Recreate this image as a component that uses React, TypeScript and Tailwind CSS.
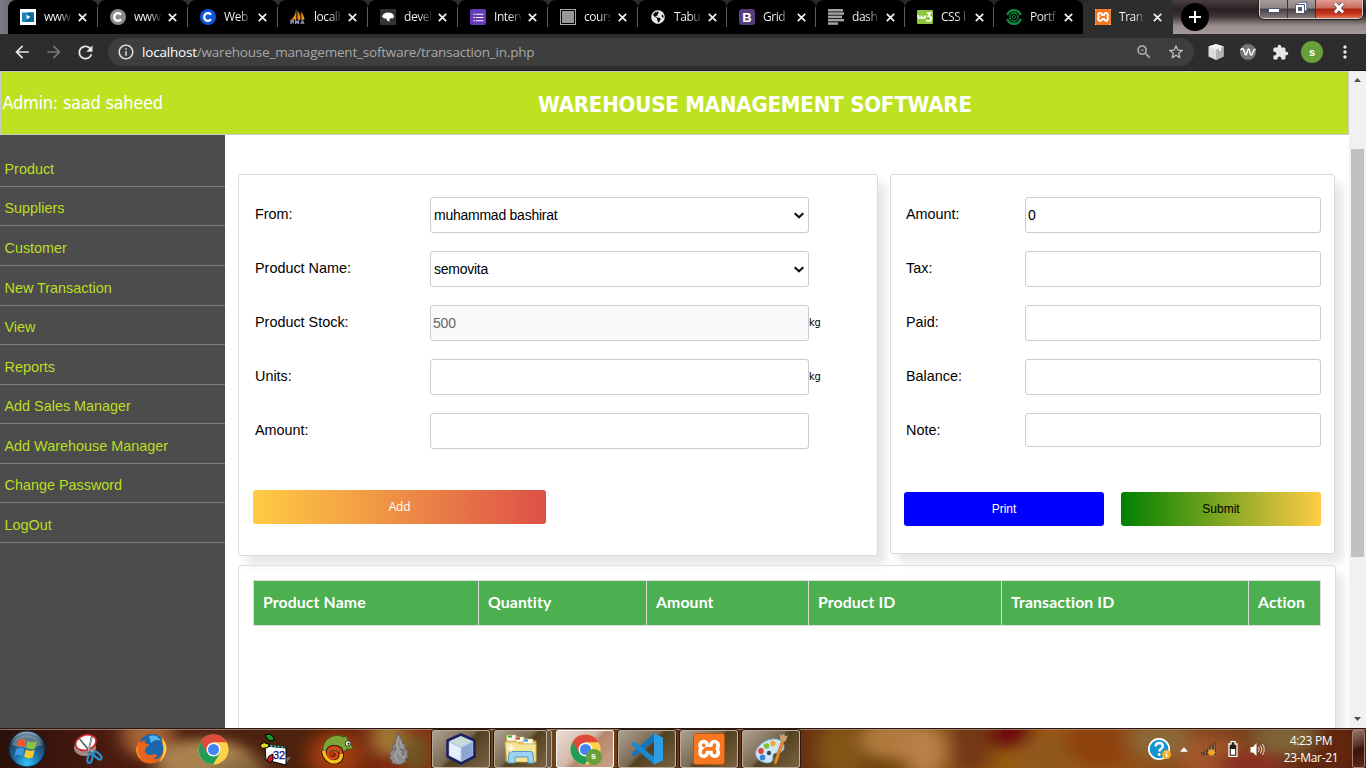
import React from "react";
import {
  MdArrowBack,
  MdArrowForward,
  MdRefresh,
  MdInfoOutline,
  MdZoomOut,
  MdStarBorder,
  MdExtension,
  MdMoreVert,
  MdFormatListBulleted,
} from "react-icons/md";
import { FaGlobeAmericas } from "react-icons/fa";
import { SiXampp } from "react-icons/si";

/* ---------- favicons ---------- */

const VideoFav = () => (
  <svg width="16" height="16" viewBox="0 0 16 16">
    <rect width="16" height="16" fill="#fff" />
    <rect x="2" y="3.500" width="12" height="9.500" fill="#1b86b8" />
    <path d="M8 3.500h6v9.500H5z" fill="#0f6a9c" />
    <path d="M6.500 5.800v4.600l4-2.300z" fill="#fff" />
  </svg>
);

const RoundC = ({ fill }: { fill: string }) => (
  <svg width="16" height="16" viewBox="0 0 16 16">
    <circle cx="8" cy="8" r="8" fill={fill} />
    <path d="M11 5.700A3.800 3.800 0 1 0 11 10.300" fill="none" stroke="#fff" strokeWidth="2.300" />
  </svg>
);

const PmaFav = () => (
  <svg width="17" height="16" viewBox="0 0 17 16">
    <path d="M6 0C6 5 4 9 1 11h5.500zM8 1v10h3C11 7 10 4 8 1zM12 3v8h3.500C15 8 14 5 12 3z" fill="#f29111" />
    <path d="M7 0v11M11.500 2v9" stroke="#6a5030" strokeWidth="0.800" />
    <path d="M1 15.500v-3.500h2.500v2H1M6 15.500v-3.500l1.500 2L9 12v3.500M11.500 15.500l1.700-3.500 1.700 3.500M12.500 14.300h2" fill="none" stroke="#8e90b5" strokeWidth="1.400" />
  </svg>
);

const MdnFav = () => (
  <svg width="16" height="16" viewBox="0 0 16 16">
    <rect width="16" height="16" fill="#333" />
    <path d="M2 7.500L3.500 5l3-1.500 4 .2L13 5l1 2.500-1 1.700h-2.500l-1 1v2.500L7 11.500 6 9.300l-2 .2z" fill="#fff" />
  </svg>
);

const FormsFav = () => (
  <span className="flex size-4 items-center justify-center rounded-[2px] bg-[#673ab7] text-white">
    <MdFormatListBulleted size={13} />
  </span>
);

const SquareFav = () => (
  <svg width="16" height="16" viewBox="0 0 16 16">
    <rect x="0.500" y="0.500" width="15" height="15" fill="#000" stroke="#aaa" />
    <rect x="2" y="2" width="12" height="12" fill="#999" />
  </svg>
);

const GlobeFav = () => <FaGlobeAmericas size={14} color="#e8e8e8" />;

const BootFav = () => (
  <span className="flex size-4 items-center justify-center rounded-[3px] bg-[#563d7c] font-['Liberation_Sans',sans-serif] text-[13px] leading-none font-bold text-white">
    B
  </span>
);

const LinesFav = () => (
  <svg width="16" height="16" viewBox="0 0 16 16" fill="#a3a3a3">
    <rect width="15" height="2.500" />
    <rect y="3.300" width="16" height="2.500" />
    <rect y="6.600" width="14" height="2.500" />
    <rect y="9.900" width="16" height="2.500" />
    <rect y="13.300" width="10" height="2.500" />
  </svg>
);

const W3Fav = () => (
  <svg width="16" height="14" viewBox="0 0 16 14">
    <rect width="16" height="14" rx="1" fill="#8bc63e" />
    <path d="M1.200 5v1.200q0 1.800 1.700 1.800T4.600 6.200V5.500q0 2.500 1.900 2.500t1.900-2.500M9.800 3h3.500L11.300 6q2.800 0 2.800 2.400T11.500 11q-1.500 0-2.300-.8" fill="none" stroke="#fff" strokeWidth="1.700" />
  </svg>
);

const RingFav = () => (
  <svg width="16" height="16" viewBox="0 0 16 16" fill="none" stroke="#0b8a3c">
    <path d="M1.300 6.200A7 7 0 0 1 14.700 6.200M1.300 9.800A7 7 0 0 0 14.700 9.800" strokeWidth="2.400" />
    <circle cx="8" cy="8" r="4" strokeWidth="1.300" />
    <circle cx="8" cy="8" r="1.600" strokeWidth="1" />
  </svg>
);

const XamppFav = () => (
  <span className="flex size-4 items-center justify-center bg-white">
    <SiXampp size={16} color="#f37623" />
  </span>
);

const tabs = [
  { title: "www.", icon: <VideoFav /> },
  { title: "www.", icon: <RoundC fill="#8a8a8a" /> },
  { title: "Web", icon: <RoundC fill="#0b57d8" /> },
  { title: "localh", icon: <PmaFav /> },
  { title: "devel", icon: <MdnFav /> },
  { title: "Interv", icon: <FormsFav /> },
  { title: "cours", icon: <SquareFav /> },
  { title: "Tabul", icon: <GlobeFav />, narrow: true },
  { title: "Grid", icon: <BootFav />, narrow: true },
  { title: "dash", icon: <LinesFav />, narrow: true },
  { title: "CSS l", icon: <W3Fav />, narrow: true },
  { title: "Portf", icon: <RingFav />, narrow: true },
  { title: "Trans", icon: <XamppFav />, active: true },
];

function TabStrip() {
  return (
    <div className="flex h-[34px] overflow-hidden bg-[linear-gradient(90deg,#7a7c88_0%,#3a3234_4%,#2b2526_80%,#3a3132_87%,#4a4244_93%,#7b7374_100%)] pl-2">
      {tabs.map((t, i) => (
        <div
          key={i}
          className={
            t.active
              ? "flex h-full w-[90px] shrink-0 items-center rounded-t-[8px] bg-[#2d2d2d] pl-3"
              : t.narrow
                ? "flex h-full w-[89px] shrink-0 items-center rounded-t-[8px] bg-black pl-3"
                : "flex h-full w-[90px] shrink-0 items-center rounded-t-[8px] bg-black pl-3"
          }
        >
          <span className="flex w-4 shrink-0 justify-center">{t.icon}</span>
          <span className="ml-2 w-[27px] overflow-hidden bg-[linear-gradient(90deg,#fff_55%,#222_100%)] bg-clip-text font-['Open_Sans',sans-serif] text-[12px] leading-4 tracking-[-0.450px] whitespace-nowrap text-transparent">
            {t.title}
          </span>
          <svg className="ml-[7px] shrink-0" width="9" height="9" viewBox="0 0 9 9">
            <path d="M0.800 0.800l7.400 7.400M8.200 0.800l-7.400 7.400" stroke="#f2f2f2" strokeWidth="1.700" />
          </svg>
          {!t.active && i !== 11 && <span className="ml-auto h-5 w-px bg-[#5a5a5a]" />}
        </div>
      ))}
      <div className="flex flex-1 bg-[linear-gradient(180deg,#4a4041_0%,#2a2122_28%,#3c3334_48%,#988b8b_75%,#a59a9c_100%)]">
        <div className="mt-[3px] ml-[8px] flex size-7 items-center justify-center rounded-full bg-black">
          <svg width="12" height="12" viewBox="0 0 12 12">
            <path d="M6 0v12M0 6h12" stroke="#fff" strokeWidth="2" />
          </svg>
        </div>
        <div className="mr-[3px] ml-auto flex h-[19px] overflow-hidden rounded-b-[5px] border border-t-0 border-[#d5cfcf] shadow-[0_0_1px_1px_#221c1c]">
          <div className="flex w-7 justify-center border-r border-[#393233] bg-[linear-gradient(180deg,#a59c9c_0%,#8d8484_45%,#453d3e_50%,#847b7c_100%)]">
            <svg width="12" height="18" viewBox="0 0 12 18">
              <rect x="0.500" y="8.500" width="11" height="4" fill="#fff" stroke="#50557a" />
            </svg>
          </div>
          <div className="flex w-7 justify-center border-r border-[#393233] bg-[linear-gradient(180deg,#a59c9c_0%,#8d8484_45%,#453d3e_50%,#847b7c_100%)]">
            <svg width="13" height="18" viewBox="0 0 13 18">
              <path d="M4.500 3.500h6v7" fill="none" stroke="#50557a" strokeWidth="3.400" />
              <path d="M4 3.500h6.500v7" fill="none" stroke="#fff" strokeWidth="1.600" />
              <rect x="2" y="6" width="6" height="6" fill="#555" stroke="#50557a" strokeWidth="3.600" />
              <rect x="2" y="6" width="6" height="6" fill="#5a5a6a" stroke="#fff" strokeWidth="2" />
            </svg>
          </div>
          <div className="flex w-[46px] justify-center bg-[linear-gradient(180deg,#dd9d93_0%,#cb6a5c_45%,#a8200c_50%,#cb3c22_80%,#e0765e_100%)]">
            <svg width="14" height="17" viewBox="0 0 14 17">
              <path d="M3 3.500l8 9M11 3.500l-8 9" stroke="#5a4458" strokeWidth="4.600" />
              <path d="M3 3.500l8 9M11 3.500l-8 9" stroke="#fff" strokeWidth="2.800" />
            </svg>
          </div>
        </div>
      </div>
    </div>
  );
}

function Toolbar() {
  return (
    <div className="flex h-[37px] items-center border-b border-[#1b1b1b] bg-[#2d2d2d] pl-3 text-[#e8e8e8]">
      <MdArrowBack size={20} />
      <MdArrowForward size={20} className="ml-3 text-[#777]" />
      <MdRefresh size={21} className="ml-[11px]" />
      <div className="ml-3 flex h-7 w-[1086px] items-center rounded-full bg-[#3e3e3e] pl-[9px]">
        <MdInfoOutline size={18} className="text-[#e0e0e0]" />
        <span className="ml-[7px] font-['Open_Sans',sans-serif] text-[13.500px] tracking-[-0.200px] whitespace-nowrap text-[#a8a8a8]">
          <span className="text-white">localhost</span>/warehouse_management_software/transaction_in.php
        </span>
        <MdZoomOut size={18} className="ml-auto text-[#b5b5b5]" />
        <MdStarBorder size={18} className="mr-[9px] ml-[14px] text-[#c8c8c8]" />
      </div>
      <svg className="ml-3.5" width="16" height="16" viewBox="0 0 16 16">
        <path d="M8 0l7.500 2.500v10L8 16 .5 12.500v-10z" fill="#dcdcdc" />
        <path d="M8 5.500l7.500-3v10L8 16z" fill="#b4b4b4" />
        <path d="M.5 2.500L8 0l7.500 2.500L8 5.500z" fill="#f2f2f2" />
        <path d="M11 4.200l2-.8v3l-2 .8z" fill="#f6f6f6" />
      </svg>
      <svg className="ml-4" width="16" height="16" viewBox="0 0 16 16">
        <circle cx="8" cy="8" r="8" fill="#777" />
        <path d="M.5 6C2 4.500 3.300 4.300 4 6.500s1 4.500 2 4.500S7.200 5 8.600 5s1 6 2.600 6S12.500 6 15.500 5" fill="none" stroke="#fff" strokeWidth="1.500" />
      </svg>
      <MdExtension size={17} className="ml-4" />
      <div className="ml-3 flex size-[22px] items-center justify-center rounded-full bg-[#689f38] font-['Liberation_Sans',sans-serif] text-[11px] leading-none font-bold text-white">
        s
      </div>
      <MdMoreVert size={20} className="ml-3" />
    </div>
  );
}

/* ---------- page ---------- */

const menu = [
  "Product",
  "Suppliers",
  "Customer",
  "New Transaction",
  "View",
  "Reports",
  "Add Sales Manager",
  "Add Warehouse Manager",
  "Change Password",
  "LogOut",
];

function Sidebar() {
  return (
    <nav className="w-[225px] shrink-0 bg-[#4c4c4c] pt-[12.400px]">
      {menu.map((m) => (
        <div
          key={m}
          className="flex h-[39.560px] items-end border-b border-[#808080] pb-[8px] pl-[4.500px] text-[14.400px] leading-[18px] text-[#bbdf22]"
        >
          {m}
        </div>
      ))}
    </nav>
  );
}

const Chevron = () => (
  <svg className="mr-[3px] ml-auto" width="12" height="7" viewBox="0 0 12 7">
    <path d="M1.700 1.200l4.300 4 4.300-4" fill="none" stroke="#111" strokeWidth="2.100" />
  </svg>
);

function Field({
  label,
  value,
  select,
  disabled,
  unit,
}: {
  label: string;
  value?: string;
  select?: boolean;
  disabled?: boolean;
  unit?: string;
}) {
  return (
    <div className="flex h-9">
      <span className="w-[175px] pt-[8px] text-[14.400px] leading-[18px]">{label}</span>
      <div
        className={
          disabled
            ? "flex w-[379px] items-center rounded-[3px] border border-[#ccc] bg-[#fafafa] pl-0.5 text-[14px] tracking-[-0.200px] text-[#666]"
            : "flex w-[379px] items-center rounded-[3px] border border-[#ccc] bg-white pt-px pl-[3px] text-[14px] tracking-[-0.250px]"
        }
      >
        {value}
        {select && <Chevron />}
      </div>
      {unit && (
        <span className="self-center pt-px font-['DejaVu_Sans_Condensed','DejaVu_Sans',sans-serif] text-[11px] tracking-[-0.300px]">
          {unit}
        </span>
      )}
    </div>
  );
}

function PayField({ label, value, short }: { label: string; value?: string; short?: boolean }) {
  return (
    <div className="flex h-9 items-start">
      <span className="w-[119px] pt-[8px] text-[14.400px] leading-[18px]">{label}</span>
      <div
        className={
          short
            ? "flex h-[34px] w-[296px] items-center rounded-[3px] border border-[#ccc] bg-white pl-0.5 text-[14px]"
            : "flex h-9 w-[296px] items-center rounded-[3px] border border-[#ccc] bg-white pl-0.5 text-[14px]"
        }
      >
        {value}
      </div>
    </div>
  );
}

function Content() {
  return (
    <main className="flex-1 overflow-hidden bg-white pt-[39px] pl-[13px]">
      <div className="flex items-start gap-3">
        <section className="h-[382px] w-[640px] rounded-[3px] border border-[#dadcdc] bg-white pt-[22px] pl-4 shadow-[8px_9px_8px_#e6e8ea]">
          <div className="flex flex-col gap-[18px]">
            <Field label="From:" value="muhammad bashirat" select />
            <Field label="Product Name:" value="semovita" select />
            <Field label="Product Stock:" value="500" disabled unit="kg" />
            <Field label="Units:" unit="kg" />
            <Field label="Amount:" />
          </div>
          <div className="mt-[41px] -ml-0.5 flex h-[34px] w-[293px] items-center justify-center rounded-[3px] bg-[linear-gradient(90deg,#ffcc44,#dd5047)] font-['Open_Sans',sans-serif] text-[12px] tracking-[-0.200px] text-white">
            Add
          </div>
        </section>
        <section className="h-[380px] w-[445px] rounded-[3px] border border-[#dadcdc] bg-white pt-[22px] pl-[15px] shadow-[8px_9px_8px_#e6e8ea]">
          <div className="flex flex-col gap-[18px]">
            <PayField label="Amount:" value="0" />
            <PayField label="Tax:" />
            <PayField label="Paid:" />
            <PayField label="Balance:" />
            <PayField label="Note:" short />
          </div>
          <div className="mt-[43px] -ml-0.5 flex gap-[17px] text-[12px]">
            <div className="flex h-[34px] w-[200px] items-center justify-center rounded-[3px] bg-[#0000ff] text-white">
              Print
            </div>
            <div className="flex h-[34px] w-[200px] items-center justify-center rounded-[3px] bg-[linear-gradient(90deg,#008000,#ffcc44)]">
              Submit
            </div>
          </div>
        </section>
      </div>
      <section className="mt-[9px] h-[200px] w-[1098px] rounded-[3px] border border-[#dadcdc] pt-3.5 pl-3.5 shadow-[8px_9px_8px_#e6e8ea]">
        <div className="flex h-[46px] w-[1068px] items-stretch border border-[#ddd] bg-[#4caf50] font-['Lato',sans-serif] text-[15.800px] font-bold tracking-[0.120px] text-white">
          <div className="flex w-[225px] items-center border-r border-[#ddd] pb-0.5 pl-[9px]">Product Name</div>
          <div className="flex w-[168px] items-center border-r border-[#ddd] pb-0.5 pl-[9px]">Quantity</div>
          <div className="flex w-[162px] items-center border-r border-[#ddd] pb-0.5 pl-[9px]">Amount</div>
          <div className="flex w-[193px] items-center border-r border-[#ddd] pb-0.5 pl-[9px]">Product ID</div>
          <div className="flex w-[247px] items-center border-r border-[#ddd] pb-0.5 pl-[9px]">Transaction ID</div>
          <div className="flex flex-1 items-center pb-0.5 pl-[9px]">Action</div>
        </div>
      </section>
    </main>
  );
}

function ScrollBar() {
  return (
    <div className="flex w-[17px] shrink-0 flex-col items-center bg-[#f1f1f1]">
      <svg className="mt-[7px]" width="7" height="4" viewBox="0 0 7 4">
        <path d="M3.500 0L7 4H0z" fill="#505050" />
      </svg>
      <div className="mt-[67px] h-[408px] w-[13px] bg-[#c1c1c1]" />
      <svg className="mt-auto mb-[7px]" width="7" height="4" viewBox="0 0 7 4">
        <path d="M0 0h7L3.500 4z" fill="#505050" />
      </svg>
    </div>
  );
}

/* ---------- taskbar ---------- */

const Wallpaper = () => (
  <svg className="absolute inset-0" width="1366" height="40" viewBox="0 0 1366 40" preserveAspectRatio="none">
    <defs>
      <filter id="soft" x="-20%" y="-60%" width="140%" height="220%">
        <feGaussianBlur stdDeviation="9 6" />
      </filter>
      <linearGradient id="base" x1="0" x2="1">
        <stop offset="0" stopColor="#2a1009" />
        <stop offset="0.08" stopColor="#4a1b10" />
        <stop offset="0.22" stopColor="#4d230e" />
        <stop offset="0.3" stopColor="#8b2a0e" />
        <stop offset="0.36" stopColor="#6b4a20" />
        <stop offset="0.58" stopColor="#6b2b12" />
        <stop offset="0.62" stopColor="#6a420f" />
        <stop offset="0.75" stopColor="#9a5a10" />
        <stop offset="0.88" stopColor="#8a4a20" />
        <stop offset="1" stopColor="#4a190c" />
      </linearGradient>
    </defs>
    <rect width="1366" height="40" fill="url(#base)" />
    <g filter="url(#soft)">
      <ellipse cx="148" cy="6" rx="26" ry="24" fill="#a56335" />
      <ellipse cx="205" cy="34" rx="50" ry="24" fill="#a98250" />
      <ellipse cx="240" cy="40" rx="26" ry="10" fill="#8b6a40" />
      <ellipse cx="335" cy="26" rx="26" ry="22" fill="#a33c10" />
      <ellipse cx="388" cy="8" rx="16" ry="20" fill="#a17a38" />
      <ellipse cx="415" cy="24" rx="12" ry="22" fill="#6b5a28" />
      <ellipse cx="842" cy="22" rx="24" ry="30" fill="#835519" />
      <ellipse cx="890" cy="10" rx="28" ry="20" fill="#b07a3c" />
      <ellipse cx="925" cy="22" rx="22" ry="26" fill="#b9804a" />
      <ellipse cx="970" cy="16" rx="22" ry="28" fill="#743819" />
      <ellipse cx="1010" cy="4" rx="22" ry="16" fill="#700d08" />
      <ellipse cx="1050" cy="28" rx="34" ry="22" fill="#91591a" />
      <ellipse cx="1100" cy="14" rx="34" ry="24" fill="#8e4310" />
      <ellipse cx="1160" cy="12" rx="32" ry="18" fill="#8a6835" />
      <ellipse cx="1215" cy="30" rx="36" ry="20" fill="#a3562b" />
      <ellipse cx="1285" cy="8" rx="34" ry="18" fill="#7d6335" />
      <ellipse cx="1250" cy="34" rx="34" ry="14" fill="#8a3020" />
      <ellipse cx="1335" cy="20" rx="24" ry="24" fill="#63250f" />
    </g>
  </svg>
);

const StartOrb = () => (
  <svg width="38" height="38" viewBox="0 0 38 38">
    <defs>
      <radialGradient id="orb" cx="0.5" cy="0.9" r="0.9">
        <stop offset="0" stopColor="#35c6f5" />
        <stop offset="0.4" stopColor="#1c6fa8" />
        <stop offset="0.75" stopColor="#1c4260" />
        <stop offset="1" stopColor="#9fb6c6" />
      </radialGradient>
    </defs>
    <circle cx="19" cy="19" r="18" fill="url(#orb)" stroke="#0c2a40" strokeWidth="1.200" />
    <path d="M4 15a15.500 13 0 0 1 30 0q-15 6-30 0z" fill="#fff" opacity="0.280" />
    <path d="M10 10.500q4.500-2.500 8.200 0L16.700 17q-3.700-2.200-8 0z" fill="#f0592a" />
    <path d="M19.500 11q4.500 2.500 9.500 0L27 18.500q-4.500 2-8.800-.7z" fill="#8bc53f" />
    <path d="M8.300 18.800q4.200-2.200 8 0l-1.700 7q-3.700-2.200-8 0z" fill="#3f9be0" />
    <path d="M17.800 19.500q4.500 2.400 8.900.6l-1.900 7.200q-4.500 2-8.700-.7z" fill="#fbc928" />
  </svg>
);

const Snip = () => (
  <svg width="32" height="32" viewBox="0 0 32 32">
    <ellipse cx="12" cy="15" rx="11" ry="8" fill="#b9a9a4" opacity="0.800" />
    <ellipse cx="13" cy="9.500" rx="10.500" ry="7.500" fill="#fff" stroke="#d3222a" strokeWidth="1.600" transform="rotate(-18 13 10)" />
    <path d="M6 5l13 16M19 3l-4 17" stroke="#556068" strokeWidth="1.900" />
    <path d="M7 5l12 14M19 4l-4 15" stroke="#dfe5e8" strokeWidth="0.700" />
    <ellipse cx="17" cy="25.500" rx="2.300" ry="4.600" fill="none" stroke="#2a8fd0" strokeWidth="2.200" transform="rotate(14 17 25)" />
    <ellipse cx="24.500" cy="22.500" rx="2.300" ry="5" fill="none" stroke="#2a8fd0" strokeWidth="2.200" transform="rotate(-45 24.500 22.500)" />
  </svg>
);

const Firefox = () => (
  <svg width="32" height="32" viewBox="0 0 32 32">
    <circle cx="17" cy="14.500" r="13.500" fill="#1b66ac" />
    <path d="M14 3q8-2 12 5-6-3-10 2z" fill="#57b6e8" />
    <path d="M29 7q4 8 0 15-4 8-14 8.500Q3 30 1.500 18 1 11 5 6.500l.5 3Q7 7.500 10 7q-1 2.500 1 3.500l3 .8q0 2-3 3 0 3-1.500 3.700 2 4.500 6 4 4-1.800 7 .3-2 3.500-5 4Q27 27 28 17q.5-5-1.500-9z" fill="#e8641b" />
    <path d="M26 4q7 7 5 15-2 7-7 10 5-7 4.500-13Q28 8 26 4z" fill="#fbd13f" />
    <path d="M3 12q-2 9 4 14-6-3-6-10z" fill="#f99b2d" />
  </svg>
);

const Chrome = ({ size = 31 }: { size?: number }) => (
  <svg width={size} height={size} viewBox="0 0 32 32">
    <circle cx="16" cy="16" r="15.500" fill="#ffd24a" />
    <path d="M16 16L2.600 8.250A15.500 15.500 0 0 0 15.500 31.500L22.500 20z" fill="#1f9e5a" />
    <path d="M16 16L9.500 19.500 2.600 8.250A15.500 15.500 0 0 1 29.500 8.500H16z" fill="#df4a3c" />
    <circle cx="16" cy="16" r="7.200" fill="#fff" />
    <circle cx="16" cy="16" r="5.700" fill="#4285f4" />
  </svg>
);

const Dev32 = () => (
  <svg width="33" height="33" viewBox="0 0 33 33">
    <path d="M26 25l6-1-5 6h-3z" fill="#777" />
    <path d="M6 13l21 2v17L7 27z" fill="#fff" stroke="#000" />
    <path d="M8 12.500l18 2" stroke="#28d6e0" strokeWidth="1.600" strokeDasharray="2 1.500" />
    <path d="M6 2l5-1 4 4-1 3-5-1z" fill="#139a2a" stroke="#000" />
    <path d="M1 12l4-2.500 5 2-1 3-6 1z" fill="#e3d81c" stroke="#000" />
    <path d="M10 23l4-2v6l-3 3-3-3z" fill="#d01818" stroke="#000" />
    <text x="14" y="25.500" fontSize="11" fontFamily="Liberation Sans, sans-serif" fill="#16168a" stroke="#16168a" strokeWidth="0.300">32</text>
  </svg>
);

const Chameleon = () => (
  <svg width="33" height="31" viewBox="0 0 33 31">
    <path d="M2 20Q0 6 12 2q6-2 10 1l3-1q1 3 3 5 2 3 4 7-2 2-6 1-4 5-7 4-6-5-12 0z" fill="#7da437" stroke="#3e5a18" />
    <path d="M2 17q2 11 11 11.500 8-.5 8-8T13 13q-6 0-6.500 6t6 5.500q4-1 3.500-4.500-1-3-4-2" fill="none" stroke="#2a1305" strokeWidth="4" />
    <path d="M2.500 17q2 10.500 10.500 11 7.500-.5 7.500-8" fill="none" stroke="#f5c21b" strokeWidth="3.400" />
    <path d="M20.500 20Q20 13.500 13 13.500q-5.500 0-6 5.500t5.500 5.500q4-1 3.500-4.500-1-3-4-2" fill="none" stroke="#e2451c" strokeWidth="2.800" />
    <circle cx="27" cy="9.500" r="2.800" fill="#f7f5dc" stroke="#30441a" />
    <circle cx="27.500" cy="9.700" r="1" fill="#111" />
  </svg>
);

const Feather = () => (
  <svg width="20" height="32" viewBox="0 0 20 32">
    <path d="M9.500 0l2 5 2 2v3l3 2-.5 4 3 2-1 4 1.500 1-3 3v3l-5 2.500H8L3 30l-.5-3L0 25l2-2-1.500-3L4 16l-1-3 3-2 .5-4z" fill="#8d8d8d" stroke="#5c5c5c" strokeWidth="0.800" />
    <path d="M9.500 3l-2 9 2 4-4 6 4 7M11 8l2 6-3 6 5 5" stroke="#aaa" strokeWidth="1.300" fill="none" />
    <path d="M11 16l4 2-2 5M7 14l-2 4" stroke="#6c6c6c" strokeWidth="1.400" fill="none" />
  </svg>
);

const Cube = () => (
  <svg width="32" height="32" viewBox="0 0 32 32">
    <path d="M16 1.500L29.500 7.500v16L16 30.500 2.500 23.500v-16z" fill="#b5c6e2" stroke="#1d2060" strokeWidth="2.600" strokeLinejoin="round" />
    <path d="M16 3.200L27 8 16 13.500 5 8z" fill="#c9dcd8" />
    <path d="M4.500 9.500L15.500 15v12.800L4.500 22.500z" fill="#e6effb" />
    <path d="M16.500 15l11-5.500v13l-11 5.300z" fill="#8ea4d5" />
  </svg>
);

const Explorer = () => (
  <svg width="34" height="32" viewBox="0 0 34 32">
    <path d="M2 3h9l2 3h9l1 2h9v20H2z" fill="#e9c95c" stroke="#b99732" />
    <path d="M3 2h9v6H3zM11 4h9v5h-9zM19 6h10v5H19z" fill="#fffdf0" stroke="#c6b270" strokeWidth="0.600" />
    <path d="M4 2.500h4v2H4z" fill="#35a93c" />
    <path d="M12 4.500h4v2h-4z" fill="#d2382a" />
    <path d="M20 6.500h4v2h-4z" fill="#3a8ad8" />
    <path d="M1 9h12l2 2h17v18H3z" fill="#f6e597" stroke="#c9ad50" strokeWidth="0.700" />
    <path d="M4 30l1-9q0-2.500 3-2.500h18q3 0 3 2.500l1 9h-6v-6H11v6z" fill="#9bd3f0" stroke="#4e9bc6" />
    <path d="M7 11v8M3 15h8M4.500 12.500l5 5M9.500 12.500l-5 5" stroke="#fff" strokeWidth="0.900" />
  </svg>
);

const Vscode = () => (
  <svg width="32" height="32" viewBox="0 0 32 32">
    <path d="M23 .5v7.500L3.500 23.500 0 21z" fill="#1176bd" />
    <path d="M23 31.500V24L3.500 8.500 0 11z" fill="#1889d4" />
    <path d="M23 .5L32 4.500v23L23 31.500z" fill="#2a9fe8" />
  </svg>
);

const Paint = () => (
  <svg width="34" height="32" viewBox="0 0 34 32">
    <path d="M2 23Q0 17 7 11 14 5 23 6q8 2 7 9-1 5-7 5-5 0-4 5 0 5-6 5Q4 29 2 23z" fill="#cfe6f5" stroke="#6fa3c4" />
    <circle cx="7" cy="18" r="2.900" fill="#e04438" />
    <circle cx="12.500" cy="13" r="2.800" fill="#7cc142" />
    <circle cx="19" cy="10.500" r="2.700" fill="#f4a72c" />
    <circle cx="8.500" cy="24.500" r="2.900" fill="#3b86d6" />
    <circle cx="15" cy="20" r="2.200" fill="#3a4a52" />
    <path d="M27.500 8l2.500.8L23 30l-3 1.500.2-3.500z" fill="#ea8a2a" stroke="#a65a12" strokeWidth="0.500" />
    <path d="M26 1l2 1.500 2-2 1 2.500 3-.5-2.500 6L28 9l-2-3z" fill="#c8a070" />
  </svg>
);

const ChromeBadge = () => (
  <span className="relative flex">
    <Chrome size={31} />
    <span className="absolute right-[-1px] bottom-0 flex size-[16px] items-center justify-center rounded-full bg-[#689f38] font-['Liberation_Sans',sans-serif] text-[9px] leading-none font-bold text-white">
      s
    </span>
  </span>
);

const XamppBig = () => (
  <span className="flex size-8 items-center justify-center rounded-[3px] border border-[#b9551a] bg-[#f5771f]">
    <span className="flex size-[28px] items-center justify-center bg-white">
      <SiXampp size={30} color="#f5771f" className="shrink-0" />
    </span>
  </span>
);

const pinned = [<Snip />, <Firefox />, <Chrome />, <Dev32 />, <Chameleon />, <Feather />];
const running = [
  { icon: <Cube /> },
  { icon: <Explorer />, stacked: true },
  { icon: <ChromeBadge />, active: true },
  { icon: <Vscode /> },
  { icon: <XamppBig /> },
  { icon: <Paint /> },
];

function Taskbar() {
  return (
    <div className="relative h-10 overflow-hidden border-t border-[#2a1712]">
      <Wallpaper />
      <div className="relative flex h-[39px] border-t border-[#b59a88]/70 text-white">
        <div className="flex w-[54px] items-center justify-center">
          <StartOrb />
        </div>
        <div className="ml-[6px] flex gap-1">
          {pinned.map((ic, i) => (
            <div key={i} className="flex w-[58px] items-center justify-center">
              {ic}
            </div>
          ))}
          {running.map((r, i) => (
            <div key={i} className="flex w-[58px]">
              <div
                className={
                  r.active
                    ? "flex h-[38px] flex-1 items-center justify-center rounded-[3px] border border-white/90 bg-[linear-gradient(135deg,#e8ddd3_0%,#d2b9a8_45%,#b5866c_55%,#c9a38c_100%)]"
                    : "flex h-[38px] flex-1 items-center justify-center rounded-[3px] border border-[#cdbfae]/80 bg-[linear-gradient(135deg,#ada292_0%,#7b6a52_45%,#51401f_52%,#7a6242_100%)] shadow-[0_0_0_1px_#2a1a10]"
                }
              >
                {r.icon}
              </div>
              {r.stacked && (
                <div className="h-[38px] w-[5px] rounded-r-[3px] border border-l-0 border-[#cdbfae]/80 bg-[#6b5a41]" />
              )}
            </div>
          ))}
        </div>
        <div className="ml-auto flex items-center">
          <svg width="23" height="23" viewBox="0 0 23 23">
            <circle cx="11" cy="11" r="10.200" fill="#1496d4" stroke="#fff" strokeWidth="1.800" />
            <path d="M7.500 8.500q.3-3.500 3.800-3.500 3.500.2 3.500 3.200 0 1.800-2 2.800-1.500.8-1.500 2.600" fill="none" stroke="#fff" strokeWidth="2.300" />
            <circle cx="11.200" cy="16.500" r="1.400" fill="#fff" />
            <circle cx="18.500" cy="16.500" r="4.500" fill="#f5b021" />
            <path d="M18.500 13.500v1.300M18.500 15.800v3.500" stroke="#fff" strokeWidth="1.400" />
          </svg>
          <svg className="ml-[9px]" width="8" height="5" viewBox="0 0 8 5">
            <path d="M4 .3L8 4.700H0z" fill="#fff" />
          </svg>
          <svg className="ml-[13px]" width="17" height="16" viewBox="0 0 17 16">
            <path d="M.5 11.500h2v2h-2zM3.500 9.500h2v4h-2zM6.500 7h2v6.500h-2zM9.500 4.500h2v9h-2zM12.500 1.500h2v12h-2z" fill="#8a7452" stroke="#41301c" strokeWidth="0.700" />
            <path d="M10.500 7l1 2 2.200-.8-.8 2.200 2 1-2 1 .8 2.200-2.200-.8-1 2-1-2-2.200.8.8-2.200-2-1 2-1-.8-2.200 2.200.8z" fill="#fba51c" />
          </svg>
          <svg className="ml-[10px]" width="10" height="16" viewBox="0 0 10 16">
            <path d="M3 .7h4V3h2v12.300H1V3h2z" fill="#2a1d14" stroke="#fff" strokeWidth="1.300" />
            <path d="M2.800 8h4.400v5.700H2.800z" fill="#fff" />
          </svg>
          <svg className="ml-[12px]" width="15" height="15" viewBox="0 0 15 15">
            <path d="M.5 5h2.500L6.500 1v13L3 10.500H.5z" fill="#fff" />
            <path d="M8.500 5q1.500 2.500 0 5M10.500 3.500q2.800 4 0 8M12.500 2q3.500 5.500 0 11" fill="none" stroke="#e8e0d8" strokeWidth="1" />
          </svg>
          <div className="ml-[17px] flex w-[58px] flex-col items-center font-['Open_Sans',sans-serif] text-[12px] leading-[17px] tracking-[-0.350px] whitespace-nowrap">
            <span>4:23 PM</span>
            <span>23-Mar-21</span>
          </div>
          <div className="mr-px ml-[12px] h-[38px] w-[13px] rounded-[2px] border border-[#a5806e] bg-[linear-gradient(160deg,#94746a_0%,#5a3025_40%,#3a130a_50%,#5c2a1c_100%)]" />
        </div>
      </div>
    </div>
  );
}

export default function App() {
  return (
    <div className="flex h-[768px] w-[1366px] flex-col overflow-hidden bg-white font-['Liberation_Sans',Arial,sans-serif] text-black">
      <TabStrip />
      <Toolbar />
      <div className="flex h-[657px]">
        <div className="flex w-[1349px] flex-col">
          <header className="flex h-16 shrink-0 items-center border border-[#c9cdc0] bg-[#bde222] font-['DejaVu_Sans_Condensed','DejaVu_Sans',sans-serif] text-white">
            <span className="w-[537px] pb-[2px] pl-[1.500px] text-[18px] tracking-[-0.250px] whitespace-nowrap">
              Admin: saad saheed
            </span>
            <h1 className="pt-[3px] text-[22px] font-bold tracking-[-0.180px] whitespace-nowrap">
              WAREHOUSE MANAGEMENT SOFTWARE
            </h1>
          </header>
          <div className="flex min-h-0 flex-1">
            <Sidebar />
            <Content />
          </div>
        </div>
        <ScrollBar />
      </div>
      <Taskbar />
    </div>
  );
}
